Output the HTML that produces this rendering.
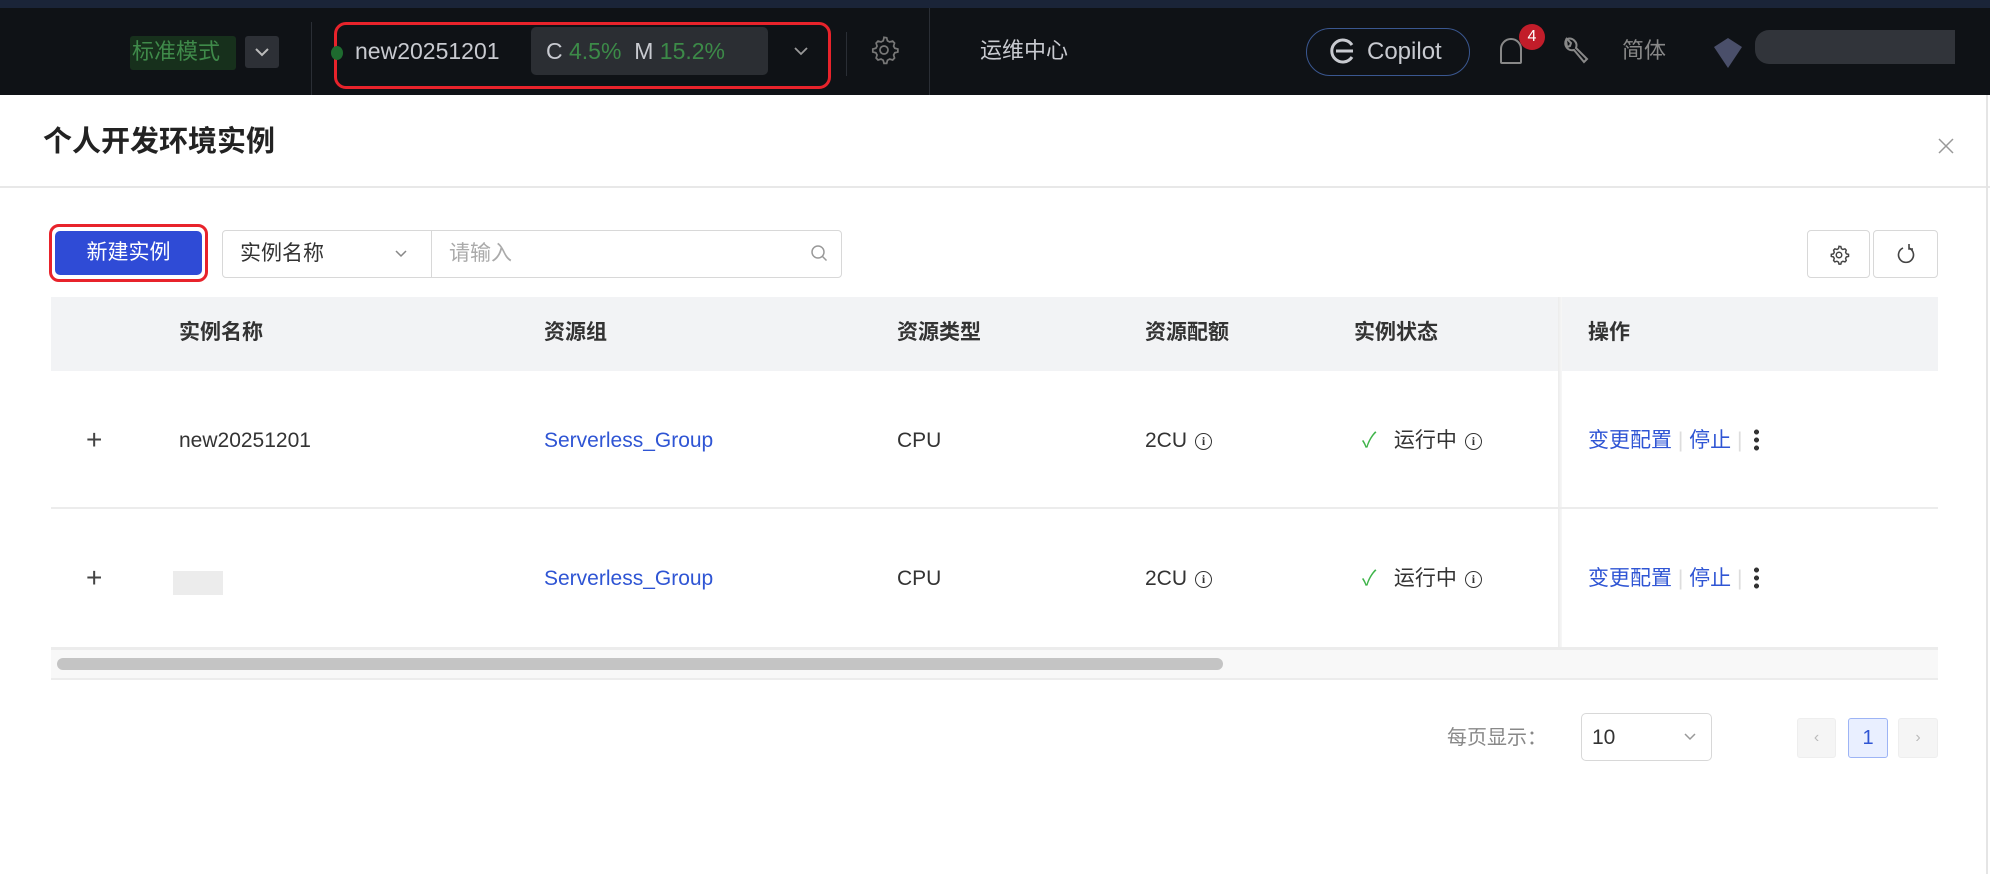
<!DOCTYPE html>
<html><head><meta charset="utf-8">
<style>
*{margin:0;padding:0;box-sizing:border-box}
body{width:1990px;height:874px;overflow:hidden;background:#fff;font-family:"Liberation Sans","Noto Sans CJK SC",sans-serif;position:relative;color:#333;line-height:1.2}
.a{position:absolute}
.top{left:0;top:0;width:1990px;height:95px;background:#0f1216}
.strip{left:0;top:0;width:1990px;height:8px;background:#1a2438}
.nt{font-size:22px;color:#c8cad0;white-space:nowrap}
.vd{width:1px;background:#2a2e35}
.th{font-size:21px;color:#333;font-weight:bold;top:320px}
.td{font-size:21px;color:#333;white-space:nowrap}
.lk{color:#2f55d4}
.info{display:inline-block;width:17px;height:17px;border:1.6px solid #333;border-radius:50%;font-size:12px;line-height:14px;text-align:center;font-weight:bold;vertical-align:2px;margin-left:8px;font-family:"Liberation Serif",serif}
.dots{display:inline-block;width:5px;height:23px;vertical-align:-4px;background:radial-gradient(circle,#333 2.4px,transparent 2.6px) 0 0/5px 8px repeat-y;margin-left:12px}
</style></head><body>
<div class="a top"></div><div class="a strip"></div>
<div class="a" style="left:130px;top:36px;width:106px;height:34px;background:#17301c;border-radius:3px"></div>
<div class="a nt" style="left:132px;top:39px;color:#3f8a4a">标准模式</div>
<div class="a" style="left:245px;top:36px;width:34px;height:32px;background:#2d3036;border-radius:3px"></div>
<svg class="a" style="left:253px;top:45px" width="18" height="14"><path d="M3 4l6 6 6-6" stroke="#bbb" stroke-width="2" fill="none"/></svg>
<div class="a vd" style="left:311px;top:22px;height:73px"></div>
<div class="a" style="left:334px;top:22px;width:497px;height:67px;border:3px solid #e8232b;border-radius:12px"></div>
<div class="a" style="left:331px;top:46px;width:12px;height:14px;background:#1e6b2f;border-radius:50%"></div>
<div class="a nt" style="left:355px;top:38px;font-size:23px">new20251201</div>
<div class="a" style="left:531px;top:27px;width:237px;height:48px;background:#2b2e33;border-radius:5px"></div>
<div class="a nt" style="left:546px;top:38px;font-size:23px">C <span style="color:#3c8a48">4.5%</span>&nbsp; M <span style="color:#3c8a48">15.2%</span></div>
<svg class="a" style="left:792px;top:44px" width="18" height="14"><path d="M3 4l6 6 6-6" stroke="#999" stroke-width="1.8" fill="none"/></svg>
<div class="a vd" style="left:846px;top:32px;height:44px"></div>
<svg class="a" style="left:868px;top:34px" width="32" height="32" viewBox="0 0 24 24"><path d="M12 2.5l2 .3.6 2.3 1.6.9 2.3-.7 1.4 1.5-.7 2.3.9 1.6 2.3.6v2.2l-2.3.6-.9 1.6.7 2.3-1.4 1.5-2.3-.7-1.6.9-.6 2.3h-2l-.6-2.3-1.6-.9-2.3.7-1.4-1.5.7-2.3-.9-1.600-2.3-.6v-2.2l2.3-.6.9-1.6-.7-2.3 1.4-1.5 2.3.7 1.6-.9.6-2.3z" stroke="#777" stroke-width="1.3" fill="none"/><circle cx="12" cy="12" r="3" stroke="#777" stroke-width="1.3" fill="none"/></svg>
<div class="a vd" style="left:929px;top:8px;height:87px"></div>
<div class="a nt" style="left:980px;top:38px">运维中心</div>
<div class="a" style="left:1306px;top:28px;width:164px;height:48px;border:1.5px solid #3a5790;border-radius:24px"></div>
<svg class="a" style="left:1328px;top:36px" width="30" height="30" viewBox="0 0 30 30"><path d="M24 9A11 11 0 1 0 24 21" stroke="#c8cad0" stroke-width="3" fill="none"/><path d="M8 15h17" stroke="#c8cad0" stroke-width="3"/></svg>
<div class="a nt" style="left:1367px;top:38px;font-size:24px">Copilot</div>
<div class="a" style="left:1500px;top:38px;width:22px;height:26px;border:2.5px solid #888;border-radius:11px 11px 2px 2px"></div>
<div class="a" style="left:1519px;top:24px;width:26px;height:26px;background:#c21d2a;border-radius:50%;color:#fff;font-size:16px;text-align:center;line-height:26px">4</div>
<svg class="a" style="left:1560px;top:34px" width="30" height="34" viewBox="0 0 30 34"><path d="M6 6a7 7 0 0 0 8 10l10 12 3-3-11-11a7 7 0 0 0-9-9l4 4-1 3-3 1z" stroke="#888" stroke-width="2" fill="none"/></svg>
<div class="a nt" style="left:1622px;top:38px;color:#888">简体</div>
<div class="a" style="left:1714px;top:38px;width:28px;height:30px;background:#4a4f6a;clip-path:polygon(0 30%,50% 0,100% 30%,50% 100%)"></div>
<div class="a" style="left:1755px;top:30px;width:200px;height:34px;background:#3a3d44;border-radius:14px 0 0 14px;opacity:.8"></div>

<div class="a" style="left:43px;top:125px;font-size:29px;color:#222;font-weight:bold">个人开发环境实例</div>
<svg class="a" style="left:1937px;top:137px" width="18" height="18"><path d="M2 2l14 14M16 2L2 16" stroke="#999" stroke-width="1.5"/></svg>
<div class="a" style="left:0;top:186px;width:1990px;height:2px;background:#e8e8e8"></div>
<div class="a" style="left:1986px;top:95px;width:2px;height:779px;background:#e5e5e5"></div>

<div class="a" style="left:49px;top:224px;width:159px;height:58px;border:3px solid #e8232b;border-radius:10px"></div>
<div class="a" style="left:55px;top:231px;width:147px;height:44px;background:#2f4bd6;border-radius:5px;color:#fff;font-size:21px;text-align:center;line-height:44px">新建实例</div>
<div class="a" style="left:222px;top:230px;width:620px;height:48px;border:1.5px solid #d8d8d8;border-radius:4px"></div>
<div class="a" style="left:431px;top:231px;width:1px;height:46px;background:#d8d8d8"></div>
<div class="a td" style="left:240px;top:241px">实例名称</div>
<svg class="a" style="left:393px;top:248px" width="16" height="12"><path d="M3 3l5 5 5-5" stroke="#888" stroke-width="1.5" fill="none"/></svg>
<div class="a td" style="left:449px;top:241px;color:#aaa">请输入</div>
<svg class="a" style="left:810px;top:244px" width="20" height="20"><circle cx="8" cy="8" r="6" stroke="#999" stroke-width="1.5" fill="none"/><path d="M12.5 12.5l4 4" stroke="#999" stroke-width="1.5"/></svg>
<div class="a" style="left:1807px;top:230px;width:63px;height:48px;border:1.5px solid #d8d8d8;border-radius:4px"></div>
<svg class="a" style="left:1828px;top:244px" width="22" height="22" viewBox="0 0 24 24"><path d="M12 2.5l2 .3.6 2.3 1.6.9 2.3-.7 1.4 1.5-.7 2.3.9 1.6 2.3.6v2.2l-2.3.6-.9 1.6.7 2.3-1.4 1.5-2.3-.7-1.6.9-.6 2.3h-2l-.6-2.3-1.6-.9-2.3.7-1.4-1.5.7-2.3-.9-1.6-2.3-.6v-2.2l2.3-.6.9-1.6-.7-2.3 1.4-1.5 2.3.7 1.6-.9.6-2.3z" stroke="#444" stroke-width="1.6" fill="none"/><circle cx="12" cy="12" r="3" stroke="#444" stroke-width="1.6" fill="none"/></svg>
<div class="a" style="left:1873px;top:230px;width:65px;height:48px;border:1.5px solid #d8d8d8;border-radius:4px"></div>
<svg class="a" style="left:1895px;top:243px" width="22" height="22"><path d="M8 5A7.5 7.5 0 1 0 14 5" stroke="#444" stroke-width="1.6" fill="none"/><path d="M14 1v5h4" stroke="#444" stroke-width="1.6" fill="none"/></svg>

<div class="a" style="left:51px;top:297px;width:1887px;height:74px;background:#f2f3f5"></div>
<div class="a th" style="left:179px">实例名称</div>
<div class="a th" style="left:544px">资源组</div>
<div class="a th" style="left:897px">资源类型</div>
<div class="a th" style="left:1145px">资源配额</div>
<div class="a th" style="left:1354px">实例状态</div>
<div class="a th" style="left:1588px">操作</div>
<div class="a" style="left:1558px;top:297px;width:4px;height:352px;background:linear-gradient(90deg,#ececec,#f7f7f7)"></div>
<div class="a" style="left:51px;top:507px;width:1887px;height:2px;background:#ececec"></div>
<div class="a" style="left:51px;top:647px;width:1887px;height:3px;background:#ececec"></div>

<div class="a td" style="left:86px;top:423px;font-size:28px;color:#444">+</div>
<div class="a td" style="left:179px;top:428px">new20251201</div>
<div class="a td lk" style="left:544px;top:428px">Serverless_Group</div>
<div class="a td" style="left:897px;top:428px">CPU</div>
<div class="a td" style="left:1145px;top:428px">2CU<span class="info">i</span></div>
<div class="a td" style="left:1362px;top:428px"><span style="color:#3fb44a">✓</span>&nbsp;&nbsp; 运行中<span class="info">i</span></div>
<div class="a td lk" style="left:1588px;top:428px">变更配置 <span style="color:#ddd">|</span> 停止 <span style="color:#ddd">|</span><span class="dots"></span></div>

<div class="a td" style="left:86px;top:561px;font-size:28px;color:#444">+</div>
<div class="a" style="left:173px;top:571px;width:50px;height:24px;background:#ececec"></div>
<div class="a td lk" style="left:544px;top:566px">Serverless_Group</div>
<div class="a td" style="left:897px;top:566px">CPU</div>
<div class="a td" style="left:1145px;top:566px">2CU<span class="info">i</span></div>
<div class="a td" style="left:1362px;top:566px"><span style="color:#3fb44a">✓</span>&nbsp;&nbsp; 运行中<span class="info">i</span></div>
<div class="a td lk" style="left:1588px;top:566px">变更配置 <span style="color:#ddd">|</span> 停止 <span style="color:#ddd">|</span><span class="dots"></span></div>

<div class="a" style="left:51px;top:650px;width:1887px;height:28px;background:#f8f8f8"></div>
<div class="a" style="left:57px;top:658px;width:1166px;height:12px;background:#c4c4c4;border-radius:6px"></div>
<div class="a" style="left:51px;top:678px;width:1887px;height:2px;background:#ececec"></div>

<div class="a td" style="left:1447px;top:726px;color:#888;font-size:20px">每页显示：</div>
<div class="a" style="left:1581px;top:713px;width:131px;height:48px;border:1.5px solid #d8d8d8;border-radius:5px"></div>
<div class="a td" style="left:1592px;top:725px">10</div>
<svg class="a" style="left:1682px;top:731px" width="16" height="12"><path d="M3 3l5 5 5-5" stroke="#999" stroke-width="1.5" fill="none"/></svg>
<div class="a" style="left:1797px;top:718px;width:39px;height:40px;background:#f5f5f5;border:1px solid #eee;border-radius:3px;color:#bbb;text-align:center;line-height:38px">‹</div>
<div class="a" style="left:1848px;top:718px;width:40px;height:40px;background:#e9efff;border:1.5px solid #9db4f5;border-radius:3px;color:#2f55d4;text-align:center;line-height:38px;font-size:20px">1</div>
<div class="a" style="left:1898px;top:718px;width:40px;height:40px;background:#f5f5f5;border:1px solid #eee;border-radius:3px;color:#bbb;text-align:center;line-height:38px">›</div>
</body></html>
